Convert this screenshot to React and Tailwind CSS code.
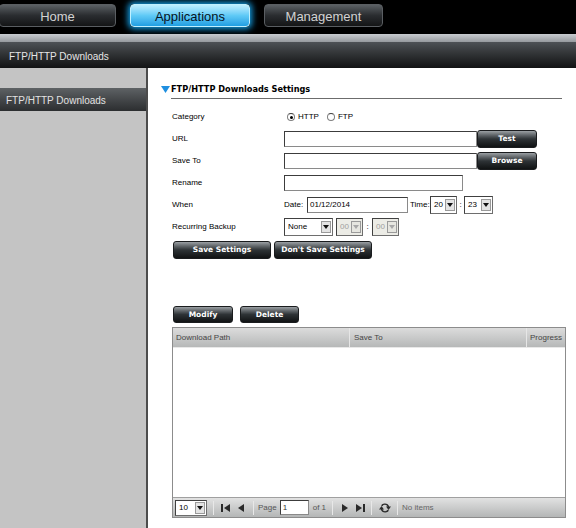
import React from 'react'

const sans = { fontFamily: '"Liberation Sans", Arial, sans-serif' }
const bold = { fontFamily: '"DejaVu Sans", Verdana, sans-serif' }

// ── Top navigation tab ────────────────────────────────────────────────────────
function Tab({ label, active, className }) {
  return active ? (
    <div
      className={`h-[23px] flex items-center justify-center pt-[2px] rounded-[4px] border border-[#bff0ff] bg-gradient-to-b from-[#bdefff] via-[#5fcaf6] to-[#1d9ee2] text-[13px] text-[#07131d] shadow-[0_0_6px_2px_#139fe6] ${className}`}
      style={sans}
    >
      {label}
    </div>
  ) : (
    <div
      className={`h-[23px] flex items-center justify-center pt-[2px] rounded-[4px] border border-[#5a5e62] bg-gradient-to-b from-[#5b6064] via-[#2a2d30] to-[#141516] text-[13px] text-[#d2d2d2] ${className}`}
      style={sans}
    >
      {label}
    </div>
  )
}

// ── Dark glossy button ────────────────────────────────────────────────────────
function DarkButton({ label, className }) {
  return (
    <div
      className={`flex items-center justify-center rounded-[3px] border border-[#1a1c1e] bg-gradient-to-b from-[#9ba0a4] via-[#2e3336] to-[#111314] text-[7.5px] font-bold text-white ${className}`}
      style={bold}
    >
      {label}
    </div>
  )
}

function Arrow({ disabled }) {
  return (
    <div className={`w-[10px] h-[12px] mr-[1px] flex items-center justify-center border border-[#9a9a9a] ${disabled ? 'bg-[#e6e6e0]' : 'bg-[#e4e4e4]'}`}>
      <svg width="6" height="4" viewBox="0 0 6 4">
        <path d="M0 0h6L3 4z" fill={disabled ? '#a8a8a8' : '#111'} />
      </svg>
    </div>
  )
}

function Select({ value, width, disabled }) {
  return (
    <div
      className={`flex items-center justify-between border border-[#6e6e6e] border-t-[#404040] border-l-[#404040] h-[18px] pl-[3px] text-[8px] ${disabled ? 'bg-[#ecece6] text-[#a0a0a0]' : 'bg-white text-black'} ${width}`}
      style={sans}
    >
      <span>{value}</span>
      <Arrow disabled={disabled} />
    </div>
  )
}

function Input({ className, value }) {
  return (
    <div
      className={`h-[16px] bg-white border border-[#8a8a8a] border-t-[#3c3c3c] border-l-[#3c3c3c] pl-[2px] flex items-center text-[8px] text-black ${className}`}
      style={sans}
    >
      {value}
    </div>
  )
}

function Radio({ checked }) {
  return (
    <div className="w-[8px] h-[8px] rounded-full border border-[#808080] border-t-[#404040] bg-white flex items-center justify-center">
      {checked && <div className="w-[3px] h-[3px] rounded-full bg-black" />}
    </div>
  )
}

function Row({ label, children }) {
  return (
    <div className="h-[22px] flex items-center">
      <div className="w-[112px] text-[8px] text-black" style={sans}>{label}</div>
      <div className="flex items-center">{children}</div>
    </div>
  )
}

function Sep() {
  return <div className="w-[1px] h-[14px] bg-[#a6a6a6] border-r border-[#e8e8e8]" />
}

// ── Pager icons ───────────────────────────────────────────────────────────────
function PagerIcon({ kind }) {
  const paths = {
    first: <><rect x="0" y="0" width="2" height="8" /><path d="M9 0v8L3 4z" /></>,
    prev: <path d="M7 0v8L1 4z" />,
    next: <path d="M1 0v8l6-4z" />,
    last: <><path d="M0 0v8l6-4z" /><rect x="7" y="0" width="2" height="8" /></>,
  }
  return (
    <svg width="9" height="8" viewBox="0 0 9 8" fill="#2a2a2a">
      {paths[kind]}
    </svg>
  )
}

export default function App() {
  return (
    <div className="w-[576px] h-[528px] overflow-hidden flex flex-col bg-white" style={sans}>
      {/* Top nav */}
      <div className="h-[34px] bg-black flex items-start pt-[4px] shrink-0">
        <Tab label="Home" className="w-[117px] -ml-[1px]" />
        <Tab label="Applications" active className="w-[120px] ml-[14px]" />
        <Tab label="Management" className="w-[119px] ml-[14px]" />
      </div>
      <div className="h-[8px] shrink-0 bg-gradient-to-b from-[#c8ccd0] to-[#969a9e]" />
      <div className="h-[26px] shrink-0 flex items-center pl-[9px] pt-[3px] bg-gradient-to-b from-[#4e5256] to-[#121314] text-[10px] text-[#e6e6e6]">
        FTP/HTTP Downloads
      </div>

      <div className="flex-1 flex min-h-0">
        {/* Sidebar */}
        <div className="w-[148px] shrink-0 bg-[#c4c4c4] border-r-2 border-[#4c4c4c] pt-[20px]">
          <div className="h-[23px] flex items-center pl-[6px] pt-[2px] bg-gradient-to-b from-[#5e6265] to-[#2c2e30] text-[10px] text-[#e2e2e2]">
            FTP/HTTP Downloads
          </div>
        </div>

        {/* Content */}
        <div className="flex-1 flex flex-col">
          <div className="mt-[14px] h-[14px] flex items-center pl-[13px]">
            <svg width="9" height="7" viewBox="0 0 9 7" className="mr-[1px]">
              <path d="M0 0h9L4.5 7z" fill="#1f8fe0" />
            </svg>
            <span className="text-[8.2px] font-bold text-black" style={bold}>FTP/HTTP Downloads Settings</span>
          </div>
          <div className="mt-[2px] ml-[23px] w-[391px] h-[1px] bg-[#6c6c6c]" />

          <div className="mt-[7px] ml-[24px] flex flex-col">
            <Row label="Category">
              <div className="ml-[3px]"><Radio checked /></div>
              <span className="ml-[3px] text-[8px]">HTTP</span>
              <div className="ml-[8px]"><Radio /></div>
              <span className="ml-[3px] text-[8px]">FTP</span>
            </Row>
            <Row label="URL">
              <Input className="w-[193px]" />
              <DarkButton label="Test" className="w-[60px] h-[18px]" />
            </Row>
            <Row label="Save To">
              <Input className="w-[193px]" />
              <DarkButton label="Browse" className="w-[60px] h-[18px]" />
            </Row>
            <Row label="Rename">
              <Input className="w-[179px]" />
            </Row>
            <Row label="When">
              <span className="text-[8px] w-[23px]">Date:</span>
              <Input className="w-[101px]" value="01/12/2014" />
              <span className="text-[8px] ml-[2px] w-[20px]">Time:</span>
              <Select value="20" width="w-[27px]" />
              <span className="text-[8px] w-[7px] text-center">:</span>
              <Select value="23" width="w-[29px]" />
            </Row>
            <Row label="Recurring Backup">
              <Select value="None" width="w-[49px]" />
              <div className="w-[3px]" />
              <Select value="00" width="w-[27px]" disabled />
              <span className="text-[8px] w-[9px] text-center">:</span>
              <Select value="00" width="w-[27px]" disabled />
            </Row>
          </div>

          <div className="mt-[3px] ml-[25px] flex gap-[3px]">
            <DarkButton label="Save Settings" className="w-[98px] h-[18px]" />
            <DarkButton label="Don't Save Settings" className="w-[98px] h-[18px]" />
          </div>

          <div className="mt-[47px] ml-[25px] flex gap-[7px]">
            <DarkButton label="Modify" className="w-[60px] h-[17px]" />
            <DarkButton label="Delete" className="w-[59px] h-[17px]" />
          </div>

          {/* Table */}
          <div className="mt-[4px] ml-[24px] w-[394px] h-[191px] border border-[#8c8c8c] flex flex-col">
            <div className="h-[20px] flex bg-gradient-to-b from-[#dcdcdc] to-[#b6b8b8] border-b border-[#e8e8e8] text-[8px] text-[#444]">
              <div className="w-[177px] flex items-center pl-[3px] border-r border-[#e6e6e6]">Download Path</div>
              <div className="w-[177px] flex items-center pl-[4px] border-r border-[#e6e6e6]">Save To</div>
              <div className="flex-1 flex items-center pl-[3px]">Progress</div>
            </div>
            <div className="flex-1 bg-white" />
            <div className="h-[20px] flex items-center bg-gradient-to-b from-[#e2e2e2] to-[#b4b6b6] border-t border-[#a0a0a0] text-[8px] text-[#555]">
              <div className="ml-[2px]"><Select value="10" width="w-[32px] !h-[16px]" /></div>
              <div className="ml-[6px]"><Sep /></div>
              <div className="ml-[7px]"><PagerIcon kind="first" /></div>
              <div className="ml-[7px]"><PagerIcon kind="prev" /></div>
              <div className="ml-[7px]"><Sep /></div>
              <span className="ml-[4px]">Page</span>
              <Input className="w-[29px] ml-[3px] !h-[15px] !text-[#333]" value="1" />
              <span className="ml-[4px]">of 1</span>
              <div className="ml-[6px]"><Sep /></div>
              <div className="ml-[8px]"><PagerIcon kind="next" /></div>
              <div className="ml-[6px]"><PagerIcon kind="last" /></div>
              <div className="ml-[6px]"><Sep /></div>
              <svg width="12" height="12" viewBox="0 0 12 12" className="ml-[7px]">
                <path d="M6 1.5a4.5 4.5 0 0 1 4.2 3H12L9.5 8 7 4.5h1.6A3 3 0 0 0 3.4 4.2L2 3.2A4.5 4.5 0 0 1 6 1.5z" fill="#2a2a2a" />
                <path d="M6 10.5a4.5 4.5 0 0 1-4.2-3H0L2.5 4 5 7.5H3.4a3 3 0 0 0 5.2.3L10 8.8A4.5 4.5 0 0 1 6 10.5z" fill="#2a2a2a" />
              </svg>
              <div className="ml-[6px]"><Sep /></div>
              <span className="ml-[4px] text-[#666]">No items</span>
            </div>
          </div>
        </div>
      </div>
    </div>
  )
}
